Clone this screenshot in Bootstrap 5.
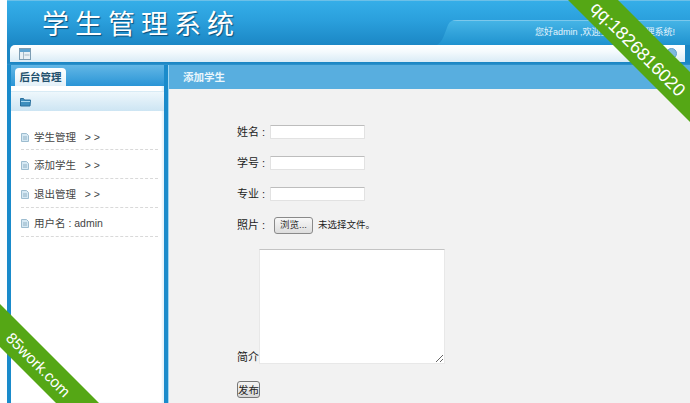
<!DOCTYPE html>
<html lang="zh"><head><meta charset="utf-8"><title>学生管理系统</title>
<link rel="stylesheet" href="https://cdn.jsdelivr.net/npm/bootstrap@5.3.0/dist/css/bootstrap.min.css">
<style>
html,body{height:403px;overflow:hidden;background:#fff}
body{font-family:"Liberation Sans","Noto Sans CJK SC",sans-serif;font-size:11px;color:#333;position:relative}
.shell{margin-left:7px;height:403px;overflow:hidden}
.topbar{height:65px;background:linear-gradient(#35aee8 0,#2a9fdc 20px,#1b86c4 45px,#1b86c4 62px,#3a9ad0 65px);border-top:1px solid #6cc0e8}
.toprow{height:44px}
.sys-title{font-family:"Noto Sans CJK SC",sans-serif;font-size:27px;font-weight:400;letter-spacing:6px;color:#fff;text-shadow:1px 1px 1px #0b4f7c;margin-left:35px;line-height:44px;white-space:nowrap}
.welcome{width:253px;height:25px;background:linear-gradient(#45b4e6,#1f92cf);border-top:1px solid #7cc8ec;color:#e4f4fc;font-size:9px;text-align:right;padding:5px 15px 0 0;white-space:nowrap;clip-path:path('M0 25 C6 22 8 12 11 5 Q13 0 20 0 H253 V25 Z')}
.toolstrip{height:17px;margin:0 5px 0 3px;background:linear-gradient(#fff 0,#f4fafd 40%,#d9ebf6 100%);border-radius:5px 0 0 0;padding:3px 0 0 9px}
.toolstrip svg{display:block}
.round-ico{width:11px;height:11px;border-radius:50%;background:#7fb9e0;border:1px solid #5f9fcc;margin-right:8px}
.body-row{height:338px}
.side{width:161px;border-left:4px solid #1a8bcb;border-right:4px solid #1a8bcb;background:#fff;box-shadow:inset -2px 0 2px #e3f3fb}
.side-edge{width:1px;background:#9fd6f2}
.side-tabs{height:21px;background:linear-gradient(#63b7e6,#2a95d6);padding:3px 0 0 4px}
.side-tab{width:51px;height:18px;background:linear-gradient(#fff,#e3f0f8);border-radius:4px 4px 0 0;color:#22506d;font-weight:700;font-size:10.5px;line-height:18px;text-align:center}
.folder-row{height:20px;margin-top:5px;background:linear-gradient(#eef7fc,#cde5f3);border-top:1px solid #d8ebf5;padding:4px 0 0 9px}
.menu-list{margin:17px 6px 0 10px}
.menu-row{height:29px;border-bottom:1px dashed #d9d9d9;padding-top:9px;display:flex;align-items:flex-start;gap:5px;color:#444;font-size:10.5px;line-height:13px;white-space:pre}
.menu-row svg{margin-top:2px}
.menu-row:first-child{height:22px;padding-top:3px}
.pane{flex:1;background:#f2f2f2}
.pane-head{height:24px;background:#58aedf;color:#eaf6fc;font-weight:700;font-size:10.5px;line-height:24px;padding-left:14px}
.entry-form{padding:36px 0 0 68px;color:#222;font-size:11px;line-height:14px}
.entry-line{height:14px;margin-bottom:17px;display:flex;align-items:center;white-space:nowrap}
.entry-line label{width:33px;white-space:pre}
.field{width:95px;height:14px;background:#fff;border:1px solid #e2e2e2;border-top-color:#bdbdbd;border-radius:1px;padding:0;outline:0}
.file-btn{width:39px;height:17px;margin-left:4px;padding:0;font-size:9.5px;line-height:14px;color:#333;background:linear-gradient(#f8f8f8,#ddd);border:1px solid #8a8a8a;border-radius:3px}
.file-note{margin-left:5px;font-size:9.5px;color:#222}
.memo-line{display:flex;align-items:flex-end;margin-top:6px;height:115px}
.memo{width:186px;height:115px;display:block;background:#fff;border:1px solid #e8e8e8;border-top-color:#c4c4c4;outline:0;padding:0;margin:0}
.memo-line span{line-height:13px}
.post-btn{display:block;margin-top:17px;width:23px;height:17px;padding:0;font-size:10.5px;line-height:14px;white-space:nowrap;color:#222;background:linear-gradient(#f4f4f4,#d8d8d8);border:1px solid #777;border-radius:3px}
.ribbon-layer{position:absolute;left:0;top:0;width:690px;height:403px;background:#55a715;pointer-events:none}
.layer-right{clip-path:polygon(568px 0,618px 0,690px 72px,690px 122px)}
.layer-left{clip-path:polygon(0 304px,99px 403px,56px 403px,0 347px)}
.ribbon-text{position:absolute;color:#fff;text-align:center;white-space:nowrap;font-family:"Liberation Sans",sans-serif;transform:rotate(45deg)}
.layer-right .ribbon-text{width:128px;height:20px;line-height:20px;font-size:18px;left:574px;top:39px}
.layer-left .ribbon-text{width:90px;height:20px;line-height:20px;font-size:15.5px;left:-7px;top:355px}
</style></head>
<body>
<div class="shell">
  <div class="topbar">
    <div class="toprow d-flex justify-content-between align-items-end">
      <div class="sys-title">学生管理系统</div>
      <div class="welcome">您好admin ,欢迎登录学生管理系统!</div>
    </div>
    <div class="toolstrip d-flex justify-content-between">
      <svg width="12" height="12" viewBox="0 0 12 12"><rect x=".5" y=".5" width="11" height="11" fill="#e8f0f5" stroke="#7d9db3"/><rect x="1" y="1" width="10" height="3" fill="#5fa3cf"/><path d="M4.500 4v7M5.500 7h5" stroke="#a5b7c4"/></svg>
      <span class="round-ico"></span>
    </div>
  </div>
  <div class="body-row d-flex">
    <div class="side">
      <div class="side-tabs"><div class="side-tab">后台管理</div></div>
      <div class="folder-row"><svg width="11" height="11" viewBox="0 0 11 11" class="d-block"><path d="M.5 2.500V10h9.500l.5-6H4.500L3.500 2.500z" fill="#3f8fbe" stroke="#2a6f9c"/><path d="M1 5h9v1H1z" fill="#a9d8f0"/></svg></div>
      <div class="menu-list">
        <div class="menu-row"><svg width="8" height="9" viewBox="0 0 8 9"><path d="M.5.500h5l2 2v6h-7z" fill="#d5e8f3" stroke="#9dbccf"/><path d="M2 4h4M2 6h4" stroke="#8fb0c4"/></svg><span>学生管理   &gt; &gt;</span></div>
        <div class="menu-row"><svg width="8" height="9" viewBox="0 0 8 9"><path d="M.5.500h5l2 2v6h-7z" fill="#d5e8f3" stroke="#9dbccf"/><path d="M2 4h4M2 6h4" stroke="#8fb0c4"/></svg><span>添加学生   &gt; &gt;</span></div>
        <div class="menu-row"><svg width="8" height="9" viewBox="0 0 8 9"><path d="M.5.500h5l2 2v6h-7z" fill="#d5e8f3" stroke="#9dbccf"/><path d="M2 4h4M2 6h4" stroke="#8fb0c4"/></svg><span>退出管理   &gt; &gt;</span></div>
        <div class="menu-row"><svg width="8" height="9" viewBox="0 0 8 9"><path d="M.5.500h5l2 2v6h-7z" fill="#d5e8f3" stroke="#9dbccf"/><path d="M2 4h4M2 6h4" stroke="#8fb0c4"/></svg><span>用户名 : admin</span></div>
      </div>
    </div>
    <div class="side-edge"></div>
    <div class="pane">
      <div class="pane-head">添加学生</div>
      <form class="entry-form">
        <div class="entry-line"><label>姓名 :</label><input class="field" type="text"></div>
        <div class="entry-line"><label>学号 :</label><input class="field" type="text"></div>
        <div class="entry-line"><label>专业 :</label><input class="field" type="text"></div>
        <div class="entry-line"><label>照片 :</label><button type="button" class="file-btn">浏览...</button><span class="file-note">未选择文件。</span></div>
        <div class="memo-line"><span>简介</span><textarea class="memo"></textarea></div>
        <button type="button" class="post-btn">发布</button>
      </form>
    </div>
  </div>
</div>
<div class="ribbon-layer layer-right"><div class="ribbon-text">qq:1826816020</div></div>
<div class="ribbon-layer layer-left"><div class="ribbon-text">85work.com</div></div>
<script src="https://cdn.jsdelivr.net/npm/bootstrap@5.3.0/dist/js/bootstrap.bundle.min.js"></script>
</body></html>
